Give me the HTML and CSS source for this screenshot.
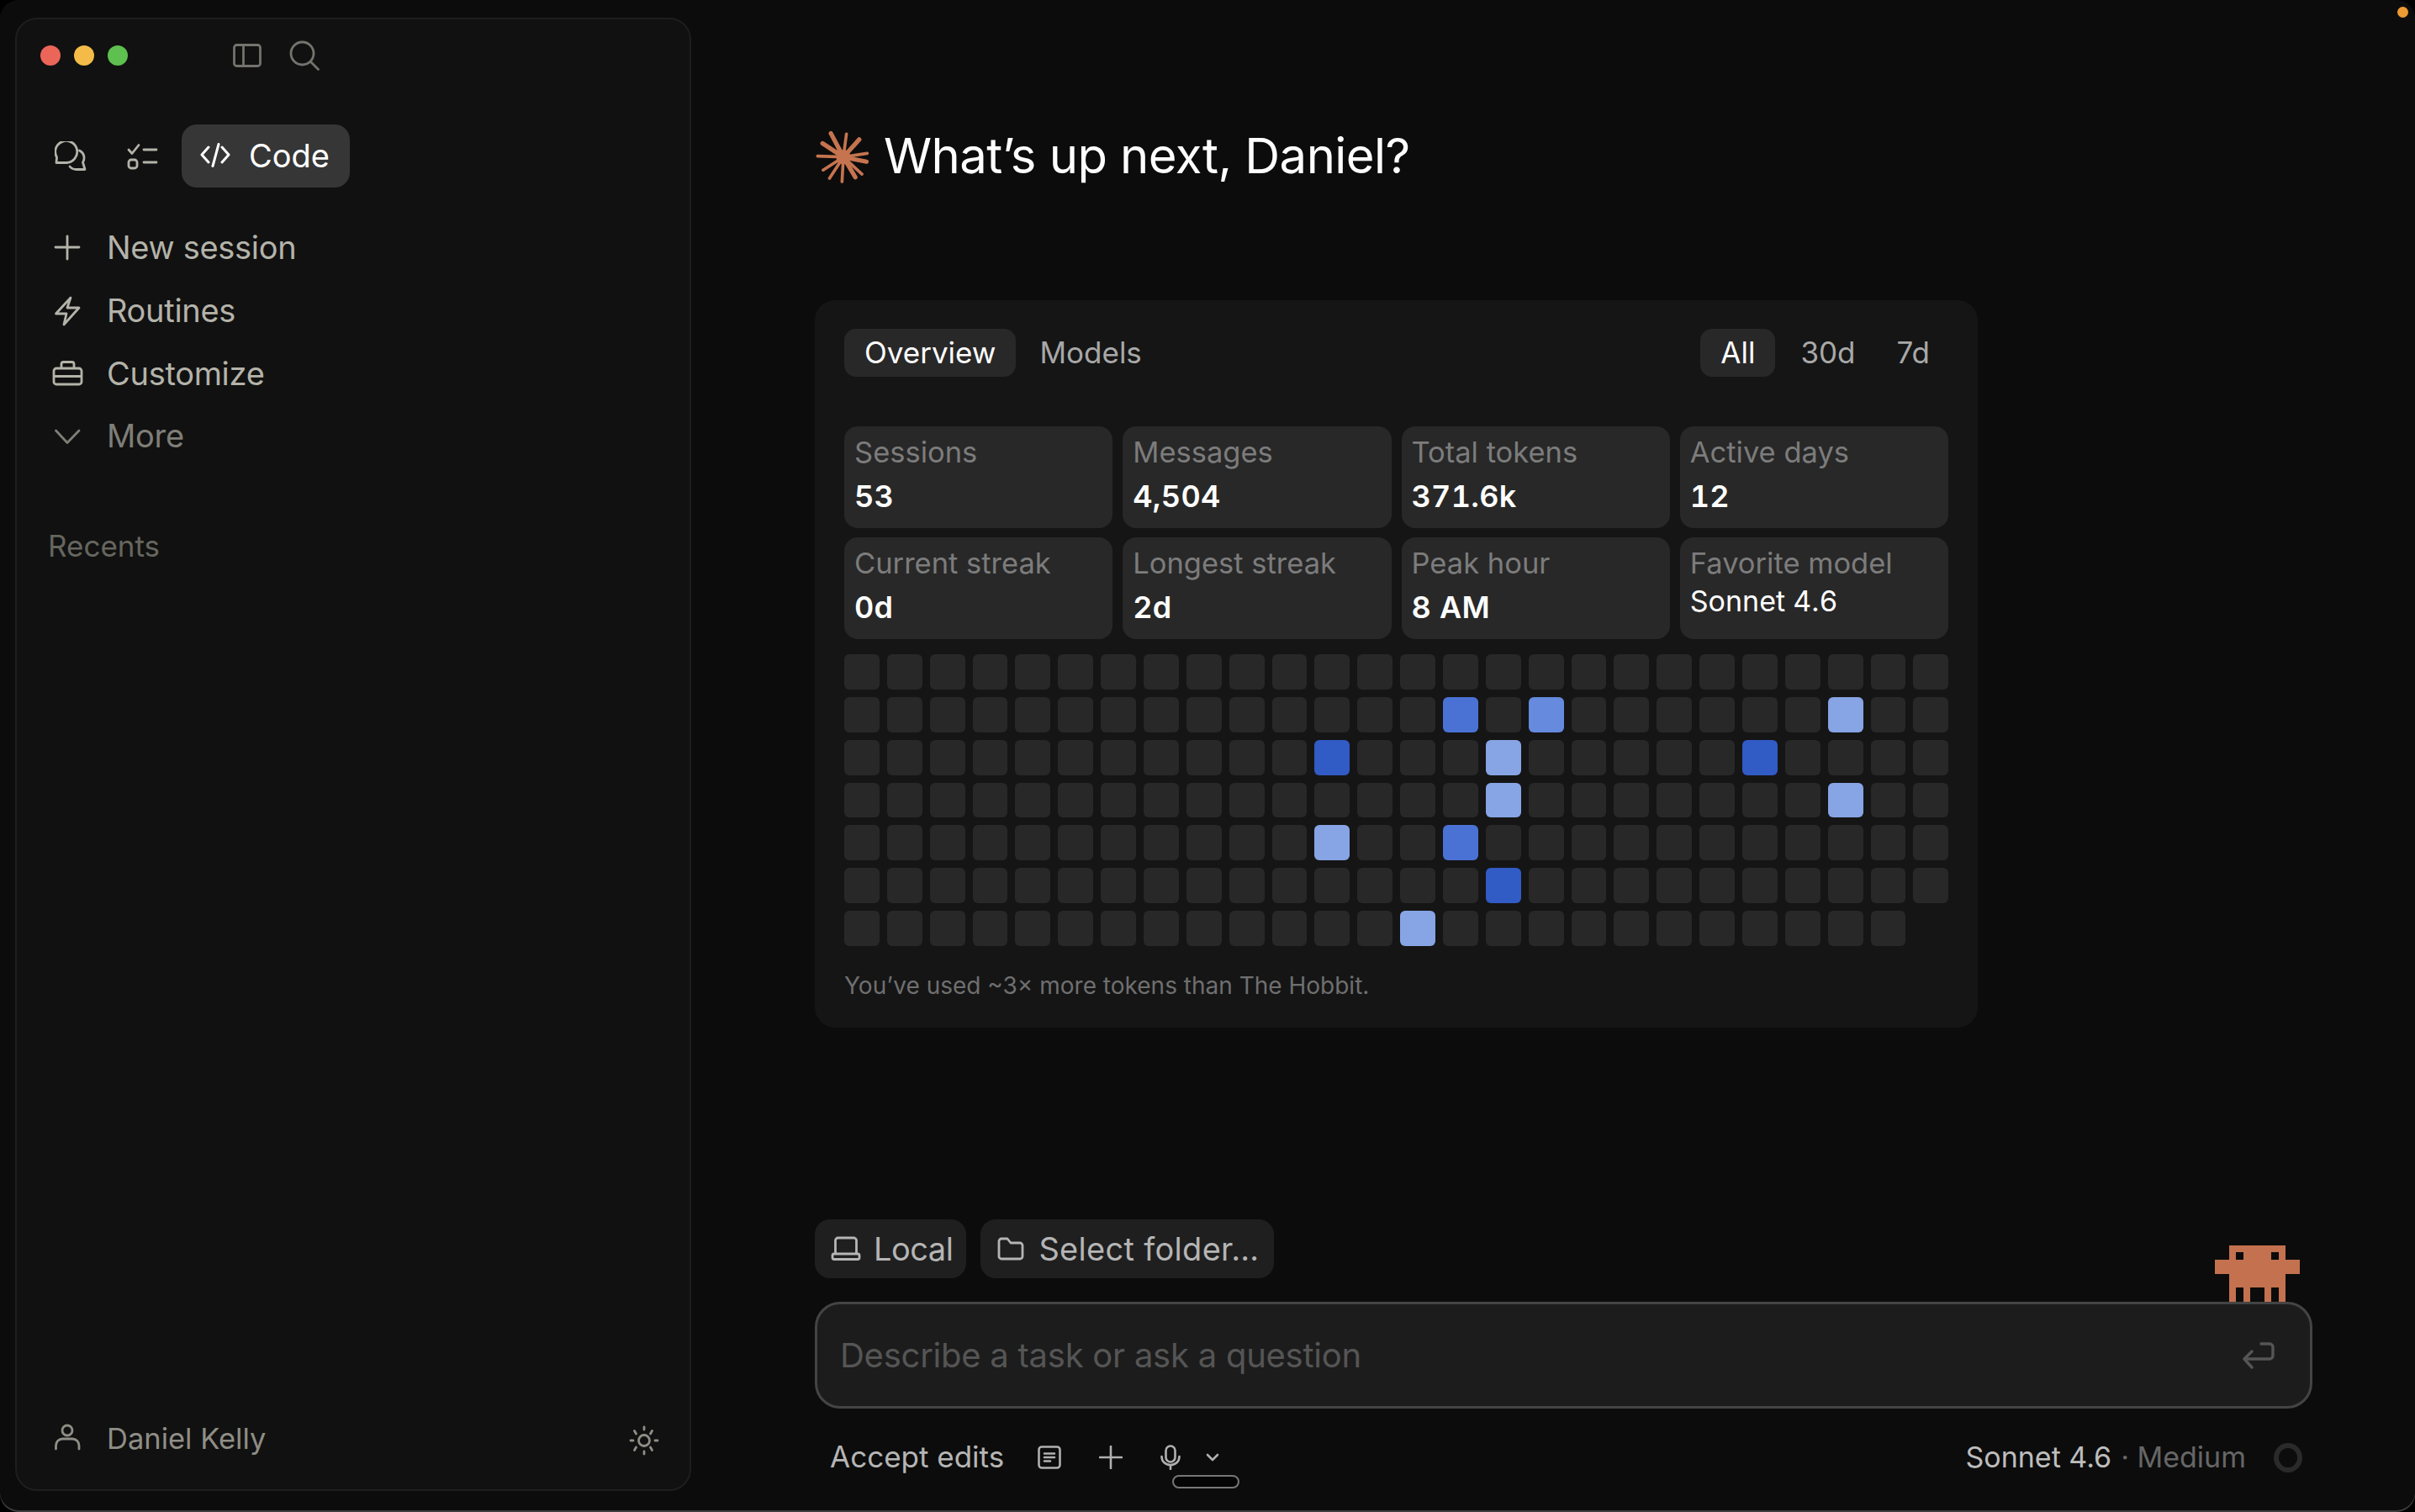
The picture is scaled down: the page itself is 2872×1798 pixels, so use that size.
FILE: index.html
```html
<!DOCTYPE html>
<html>
<head>
    <title>Claude Code</title>
    <link rel="stylesheet" href="styles.css">
</head>
<body>

    <div class="window">
        <span class="status-dot"></span>

        <aside class="sidebar">
            <div class="toolbar">
                <div class="traffic">
                    <span class="light red"></span>
                    <span class="light yellow"></span>
                    <span class="light green"></span>
                </div>
                <svg class="tool-panel" width="34" height="28" viewBox="0 0 34 28" fill="none" stroke="#74736e" stroke-width="2.8"><rect x="1.5" y="1.5" width="31" height="25" rx="3"/><path d="M12.5 1.5v25"/></svg>
                <svg class="tool-search" width="36" height="36" viewBox="0 0 36 36" fill="none" stroke="#74736e" stroke-width="2.8" stroke-linecap="round"><circle cx="15.5" cy="15.5" r="13.5"/><path d="M25.5 25.5l9 9"/></svg>
            </div>

            <div class="mode-tabs">
                <svg class="mode-icon" width="40" height="36" viewBox="65 167 40 36" fill="none" stroke="#b4b3aa" stroke-width="2.8" stroke-linejoin="round" stroke-linecap="round"><path d="M79 192.5A13 13 0 1 0 67.5 186L67 192.5Z"/><path d="M94.5 178A10 10 0 0 1 100 187C100 189.5 99.3 191 98.5 192L101 200.5H91C88 200.5 85 199.5 83 197"/></svg>
                <svg class="mode-icon" width="40" height="36" viewBox="150 167 40 36" fill="none" stroke="#b4b3aa" stroke-width="2.8" stroke-linecap="round" stroke-linejoin="round"><path d="M153 177l4 4.5 8-10"/><path d="M171 177h15M171 192h15"/><rect x="153" y="189" width="10" height="10" rx="3"/></svg>
                <div class="mode-pill">
                    <svg width="36" height="30" viewBox="238 170 36 30" fill="none" stroke="#fff" stroke-width="3" stroke-linecap="round" stroke-linejoin="round"><path d="M248 175l-8 9 8 9M264 175l8 9-8 9M260 171.500l-7 26"/></svg>
                    <span>Code</span>
                </div>
            </div>

            <nav class="nav">
                <div class="nav-row">
                    <svg width="40" height="40" viewBox="60 275 40 40" fill="none" stroke="#b4b3aa" stroke-width="2.800" stroke-linecap="round"><path d="M66 295h28M80 282v27"/></svg>
                    <span>New session</span>
                </div>
                <div class="nav-row">
                    <svg width="40" height="40" viewBox="60 349 40 40" fill="none" stroke="#b4b3aa" stroke-width="2.800" stroke-linejoin="round"><path d="M84 354L66.500 373H79L76 386L94 366H80Z"/></svg>
                    <span>Routines</span>
                </div>
                <div class="nav-row">
                    <svg width="40" height="40" viewBox="60 424 40 40" fill="none" stroke="#b4b3aa" stroke-width="2.800" stroke-linejoin="round"><rect x="64" y="438" width="33" height="19" rx="3"/><path d="M64 447.500h33M73 438v-5a2.500 2.500 0 0 1 2.500-2.500h10a2.500 2.500 0 0 1 2.500 2.500v5"/></svg>
                    <span>Customize</span>
                </div>
                <div class="nav-row muted">
                    <svg width="40" height="40" viewBox="60 499 40 40" fill="none" stroke="#7f7e78" stroke-width="2.800" stroke-linecap="round" stroke-linejoin="round"><path d="M66.500 513L80 527.500L94 513"/></svg>
                    <span>More</span>
                </div>
            </nav>

            <div class="recents">Recents</div>

            <div class="account">
                <svg width="40" height="40" viewBox="60 1693 40 40" fill="none" stroke="#8f8e86" stroke-width="2.800" stroke-linecap="round"><circle cx="80" cy="1702" r="6"/><path d="M66.500 1724V1720A8 8 0 0 1 74.500 1712H86A8 8 0 0 1 94 1720V1724"/></svg>
                <span class="account-name">Daniel Kelly</span>
                <svg class="sun" width="40" height="40" viewBox="0 0 40 40" fill="none" stroke="#8f8e86" stroke-width="2.800" stroke-linecap="round"><circle cx="20" cy="20" r="6.500"/><path d="M20 4v3M20 33v3M4 20h3M33 20h3M8.500 8.500l2 3.500M29.500 8.500l-2 3.500M8.500 31.500l2-3.500M29.500 31.500l-2-3.500"/></svg>
            </div>
        </aside>

        <main class="content">
            <div class="greeting">
                <svg class="spark" width="66" height="66" viewBox="52 44 200 200" fill="none" stroke="#c5744f" stroke-linecap="round">
                    <circle cx="155" cy="143" r="26" fill="#c5744f" stroke="none"/>
                    <path stroke-width="16" d="M110 58L155 143M212 80L155 143M80 94L155 143M238 160L155 143M198 216L155 143"/>
                    <path stroke-width="11" d="M166 60L155 143M241 130L155 143M222 205L155 143M150 232L155 143M105 220L155 143M82 190L155 143M62 140L155 143"/>
                </svg>
                <h1>What’s up next, Daniel?</h1>
            </div>

            <section class="stats-card">
                <div class="card-head">
                    <div class="seg seg-views">
                        <span class="seg-item active">Overview</span>
                        <span class="seg-item">Models</span>
                    </div>
                    <div class="seg seg-range">
                        <span class="seg-item active">All</span>
                        <span class="seg-item">30d</span>
                        <span class="seg-item">7d</span>
                    </div>
                </div>

                <div class="stat-grid">
                    <div class="stat"><div class="stat-label">Sessions</div><div class="stat-value">53</div></div>
                    <div class="stat"><div class="stat-label">Messages</div><div class="stat-value">4,504</div></div>
                    <div class="stat"><div class="stat-label">Total tokens</div><div class="stat-value">371.6k</div></div>
                    <div class="stat"><div class="stat-label">Active days</div><div class="stat-value">12</div></div>
                    <div class="stat"><div class="stat-label">Current streak</div><div class="stat-value">0d</div></div>
                    <div class="stat"><div class="stat-label">Longest streak</div><div class="stat-value">2d</div></div>
                    <div class="stat"><div class="stat-label">Peak hour</div><div class="stat-value">8 AM</div></div>
                    <div class="stat"><div class="stat-label">Favorite model</div><div class="stat-value small">Sonnet 4.6</div></div>
                </div>

                <div class="heatmap">
                    <i></i><i></i><i></i><i></i><i></i><i></i><i></i><i></i><i></i><i></i><i></i><i></i><i></i><i></i><i></i><i></i><i></i><i></i><i></i><i></i><i></i><i></i><i></i><i></i><i></i><i></i>
                    <i></i><i></i><i></i><i></i><i></i><i></i><i></i><i></i><i></i><i></i><i></i><i></i><i></i><i></i><i class="l2"></i><i></i><i class="l3"></i><i></i><i></i><i></i><i></i><i></i><i></i><i class="l4"></i><i></i><i></i>
                    <i></i><i></i><i></i><i></i><i></i><i></i><i></i><i></i><i></i><i></i><i></i><i class="l1"></i><i></i><i></i><i></i><i class="l4"></i><i></i><i></i><i></i><i></i><i></i><i class="l1"></i><i></i><i></i><i></i><i></i>
                    <i></i><i></i><i></i><i></i><i></i><i></i><i></i><i></i><i></i><i></i><i></i><i></i><i></i><i></i><i></i><i class="l4"></i><i></i><i></i><i></i><i></i><i></i><i></i><i></i><i class="l4"></i><i></i><i></i>
                    <i></i><i></i><i></i><i></i><i></i><i></i><i></i><i></i><i></i><i></i><i></i><i class="l4"></i><i></i><i></i><i class="l2"></i><i></i><i></i><i></i><i></i><i></i><i></i><i></i><i></i><i></i><i></i><i></i>
                    <i></i><i></i><i></i><i></i><i></i><i></i><i></i><i></i><i></i><i></i><i></i><i></i><i></i><i></i><i></i><i class="l1"></i><i></i><i></i><i></i><i></i><i></i><i></i><i></i><i></i><i></i><i></i>
                    <i></i><i></i><i></i><i></i><i></i><i></i><i></i><i></i><i></i><i></i><i></i><i></i><i></i><i class="l4"></i><i></i><i></i><i></i><i></i><i></i><i></i><i></i><i></i><i></i><i></i><i></i>
                </div>

                <p class="fun-fact">You’ve used ~3× more tokens than The Hobbit.</p>
            </section>

            <section class="composer">
                <div class="chips">
                    <div class="chip chip-local">
                        <svg width="36" height="30" viewBox="0 0 36 30" fill="none" stroke="#b5b5b5" stroke-width="2.800" stroke-linejoin="round"><path d="M5.500 21V5a3 3 0 0 1 3-3h19a3 3 0 0 1 3 3v16"/><rect x="2" y="21" width="32" height="6.500" rx="2"/></svg>
                        <span>Local</span>
                    </div>
                    <div class="chip">
                        <svg width="34" height="30" viewBox="0 0 34 30" fill="none" stroke="#b5b5b5" stroke-width="2.800" stroke-linejoin="round"><path d="M3 6a3 3 0 0 1 3-3h7l4 5h11a3 3 0 0 1 3 3v13a3 3 0 0 1-3 3H6a3 3 0 0 1-3-3Z"/></svg>
                        <span>Select folder…</span>
                    </div>
                </div>

                <div class="input-box">
                    <svg class="critter" width="101" height="67" viewBox="0 0 12 8" shape-rendering="crispEdges">
                        <path fill="#c4714f" d="M2 0h8v2h2v2h-2v4H9V6H8v2H7V6H5v2H4V6H3v2H2V4H0V2h2Z"/>
                        <path fill="#0b0b0b" d="M3 1h1v1H3ZM8 1h1v1H8Z"/>
                    </svg>
                    <span class="placeholder">Describe a task or ask a question</span>
                    <svg width="38" height="32" viewBox="0 0 38 32" fill="none" stroke="#555" stroke-width="3.400" stroke-linecap="round" stroke-linejoin="round"><path d="M22 2h10a4 4 0 0 1 4 4v10a4 4 0 0 1-4 4H3M11 11l-9 9 9 10"/></svg>
                </div>

                <div class="input-footer">
                    <span class="accept">Accept edits</span>
                    <svg class="foot-note" width="28" height="28" viewBox="0 0 28 28" fill="none" stroke="#b0b0b0" stroke-width="2.600" stroke-linecap="round"><rect x="1.500" y="1.500" width="25" height="25" rx="3.500"/><path d="M8 9.500h12M8 14h12M8 18.500h7"/></svg>
                    <svg class="foot-plus" width="28" height="28" viewBox="0 0 28 28" fill="none" stroke="#b0b0b0" stroke-width="2.600" stroke-linecap="round"><path d="M1 14h26M14 1v26"/></svg>
                    <svg class="foot-mic" width="24" height="30" viewBox="0 0 24 30" fill="none" stroke="#b0b0b0" stroke-width="2.600" stroke-linecap="round"><rect x="6.500" y="1.500" width="11" height="19" rx="5.500"/><path d="M1.500 14c0 6 4.500 10 10.500 10s10.500-4 10.500-10M12 24v5"/></svg>
                    <svg class="foot-chevron" width="16" height="10" viewBox="0 0 16 10" fill="none" stroke="#b0b0b0" stroke-width="2.600" stroke-linecap="round" stroke-linejoin="round"><path d="M2 2l6 6 6-6"/></svg>
                    <span class="mic-bar"></span>
                    <div class="model-pick">
                        <span class="model">Sonnet 4.6</span>
                        <span class="effort">· Medium</span>
                        <span class="ring"></span>
                    </div>
                </div>
            </section>
        </main>
    </div>

</body>
</html>
```

FILE: styles.css
```css
* {
    box-sizing: border-box;
}

body {
    margin: 0;
    background-color: #000;
    font-family: Inter, "Noto Sans", sans-serif;
}

.window {
    position: relative;
    display: flex;
    width: 2872px;
    height: 1798px;
    background-color: #0c0c0c;
    border-radius: 22px;
    box-shadow: inset 0 -2px 0 #3e3e3e;
    overflow: hidden;
}

.status-dot {
    position: absolute;
    top: 8px;
    right: 8px;
    width: 13px;
    height: 13px;
    border-radius: 50%;
    background-color: #ec9a33;
}

/* sidebar */

.sidebar {
    display: flex;
    flex-direction: column;
    flex: none;
    width: 804px;
    height: 1752px;
    margin: 21px 0 0 18px;
    background-color: #111;
    border: 2px solid #1e1e1e;
    border-radius: 26px;
}

.toolbar {
    display: flex;
    align-items: center;
    height: 86px;
    padding-left: 28px;
}

.traffic {
    display: flex;
    gap: 16px;
}

.light {
    width: 24px;
    height: 24px;
    border-radius: 50%;
}

.red { background-color: #ec6559; }
.yellow { background-color: #f4bb49; }
.green { background-color: #5ec04f; }

.tool-panel {
    margin-left: 125px;
}

.tool-search {
    margin-left: 33px;
}

.mode-tabs {
    display: flex;
    align-items: center;
    height: 75px;
    margin-top: 39px;
    padding-left: 45px;
}

.mode-icon {
    margin-right: 45px;
}

.mode-icon + .mode-icon {
    margin-right: 26px;
}

.mode-pill {
    display: flex;
    align-items: center;
    gap: 22px;
    height: 75px;
    padding: 0 24px 2px 22px;
    color: #fff;
    font-size: 38px;
    background-color: #363636;
    border-radius: 18px;
}

.nav {
    margin-top: 34px;
    padding-left: 40px;
}

.nav-row {
    display: flex;
    align-items: center;
    gap: 27px;
    height: 74.7px;
    color: #b4b3aa;
    font-size: 38px;
    letter-spacing: -0.3px;
}

.nav-row.muted {
    color: #7f7e78;
}

.recents {
    height: 50px;
    margin-top: 68px;
    padding-left: 37px;
    color: #66665f;
    font-size: 35px;
    line-height: 50px;
}

.account {
    display: flex;
    align-items: center;
    gap: 27px;
    height: 50px;
    margin-top: auto;
    margin-bottom: 34px;
    padding: 0 34px 0 40px;
    color: #8f8e86;
    font-size: 34.5px;
}

.account-name {
    padding-bottom: 3px;
}

.sun {
    margin-top: 2px;
    margin-left: auto;
}

/* main column */

.content {
    display: flex;
    flex-direction: column;
    flex: 1;
    padding: 145px 122px 35px 147px;
}

.greeting {
    display: flex;
    align-items: center;
    gap: 16px;
    height: 80px;
}

.spark {
    margin-top: 4px;
}

.greeting h1 {
    margin: 0;
    color: #fff;
    font-size: 58px;
    font-weight: 400;
    letter-spacing: -0.56px;
}

.stats-card {
    width: 1383px;
    margin-top: 132px;
    padding: 34px 35px 30px;
    background-color: #151515;
    border-radius: 24px;
}

.card-head {
    display: flex;
    justify-content: space-between;
    height: 57px;
}

.seg {
    display: flex;
    gap: 6px;
}

.seg-views {
    gap: 4px;
}

.seg-item {
    display: flex;
    align-items: center;
    height: 57px;
    padding: 0 24px 2px;
    color: #a8a8a8;
    font-size: 35px;
    border-radius: 14px;
}

.seg-range .seg-item:nth-child(2) {
    padding-right: 19px;
}

.seg-range .seg-item:last-child {
    padding-right: 22px;
}

.seg-item.active {
    color: #fff;
    background-color: #282828;
}

.stat-grid {
    display: grid;
    grid-template-columns: repeat(4, 1fr);
    gap: 11px 12px;
    margin-top: 59px;
}

.stat {
    height: 121px;
    padding: 11px 12px;
    background-color: #282828;
    border-radius: 16px;
}

.stat-label {
    height: 40px;
    color: #7c7c7c;
    font-size: 34.5px;
    line-height: 40px;
}

.stat-value {
    margin-top: 12px;
    color: #fff;
    font-size: 36px;
    font-weight: 600;
    line-height: 40px;
    letter-spacing: 0.3px;
    font-variant-numeric: tabular-nums;
}

.stat-value.small {
    margin-top: 5px;
    font-size: 34px;
    font-weight: 400;
    letter-spacing: 0;
}

.heatmap {
    display: grid;
    grid-template-columns: repeat(26, 1fr);
    gap: 9px;
    margin-top: 18px;
}

.heatmap i {
    aspect-ratio: 1;
    background-color: #282828;
    border-radius: 6px;
}

.heatmap .l1 { background-color: #315bc5; }
.heatmap .l2 { background-color: #4a72d5; }
.heatmap .l3 { background-color: #658ade; }
.heatmap .l4 { background-color: #87a4e4; }

.fun-fact {
    margin: 27px 0 0;
    color: #6f6f6f;
    font-size: 28px;
    line-height: 40px;
}

/* composer */

.composer {
    margin-top: auto;
}

.chips {
    display: flex;
    gap: 17px;
}

.chip {
    display: flex;
    align-items: center;
    gap: 16px;
    height: 70px;
    padding: 0 18px 0 19px;
    color: #b5b5b5;
    font-size: 38px;
    letter-spacing: 0.3px;
    background-color: #1f1f1f;
    border-radius: 18px;
}

.chip-local {
    gap: 15px;
    padding-right: 16px;
    letter-spacing: -0.5px;
}

.input-box {
    position: relative;
    display: flex;
    align-items: center;
    justify-content: space-between;
    height: 127px;
    margin-top: 28px;
    padding: 0 42px 0 27px;
    background-color: #1c1c1c;
    border: 3px solid #444;
    border-radius: 30px;
}

.placeholder {
    color: #555;
    font-size: 40px;
    letter-spacing: -0.25px;
}

.critter {
    position: absolute;
    right: 12px;
    bottom: 100%;
    margin-bottom: 3px;
}

.input-footer {
    position: relative;
    display: flex;
    align-items: center;
    height: 60px;
    margin-top: 28px;
    padding: 0 12px 0 18px;
}

.accept {
    width: 247px;
    padding-bottom: 2px;
    color: #b5b5b5;
    font-size: 35px;
}

.foot-plus {
    margin-left: 45px;
}

.foot-mic {
    margin-left: 45px;
}

.foot-chevron {
    margin-left: 30px;
}

.mic-bar {
    position: absolute;
    top: 51px;
    left: 425px;
    width: 80px;
    height: 16px;
    background-color: #050505;
    border: 2px solid #777;
    border-radius: 8px;
}

.model-pick {
    display: flex;
    align-items: center;
    gap: 11px;
    margin-left: auto;
    font-size: 34px;
}

.model,
.effort {
    padding-bottom: 2px;
}

.model {
    color: #bdbdbd;
}

.effort {
    color: #666;
}

.ring {
    width: 34px;
    height: 35px;
    margin-left: 22px;
    border: 6px solid #2a2a2a;
    border-radius: 50%;
}
```
